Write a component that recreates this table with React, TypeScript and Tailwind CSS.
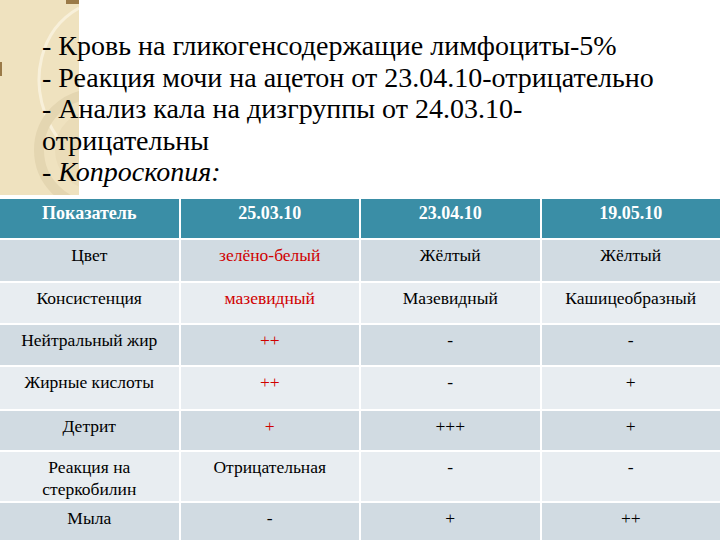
const lines = [
  { text: '- Кровь на гликогенсодержащие лимфоциты-5%' },
  { text: '- Реакция мочи на ацетон от 23.04.10-отрицательно' },
  { text: '- Анализ кала на дизгруппы от 24.03.10-' },
  { text: 'отрицательны' },
]

type Cell = { v: string; red?: boolean }

const rows: { h: string; cells: Cell[] }[] = [
  { h: 'h-[41px]', cells: [{ v: 'Цвет' }, { v: 'зелёно-белый', red: true }, { v: 'Жёлтый' }, { v: 'Жёлтый' }] },
  { h: 'h-[40px]', cells: [{ v: 'Консистенция' }, { v: 'мазевидный', red: true }, { v: 'Мазевидный' }, { v: 'Кашицеобразный' }] },
  { h: 'h-[40px]', cells: [{ v: 'Нейтральный жир' }, { v: '++', red: true }, { v: '-' }, { v: '-' }] },
  { h: 'h-[42px]', cells: [{ v: 'Жирные кислоты' }, { v: '++', red: true }, { v: '-' }, { v: '+' }] },
  { h: 'h-[39px]', cells: [{ v: 'Детрит' }, { v: '+', red: true }, { v: '+++' }, { v: '+' }] },
  { h: 'h-[49px]', cells: [{ v: 'Реакция на стеркобилин' }, { v: 'Отрицательная' }, { v: '-' }, { v: '-' }] },
  { h: 'h-[45px]', cells: [{ v: 'Мыла' }, { v: '-' }, { v: '+' }, { v: '++' }] },
]

const headers = ['Показатель', '25.03.10', '23.04.10', '19.05.10']

export default function App() {
  return (
    <div className="w-[720px] h-[540px] overflow-hidden bg-white [font-family:'Liberation_Serif','Times_New_Roman',serif] text-black">
      {/* Header text block with beige side panel */}
      <div className="relative h-[197px] pt-[30px] pl-[42px]">
        <div className="absolute left-0 top-0 w-[79px] h-[195px] bg-[#efe2bf] overflow-hidden">
          <svg width="79" height="195" viewBox="0 0 79 195" className="absolute inset-0">
            <rect x="66" y="0" width="13" height="4" fill="#9a7a48" />
            <rect x="0" y="62" width="2" height="14" fill="#9a7a48" />
            <path d="M79 8 C 40 30, 28 80, 50 125 C 60 145, 72 152, 79 155" fill="none" stroke="#f8f0da" strokeWidth="3" />
            <circle cx="95" cy="150" r="56" fill="none" stroke="#e4d6b1" strokeWidth="10" />
            <circle cx="95" cy="150" r="40" fill="#eadcb8" />
          </svg>
        </div>
        <div className="relative text-[28px] leading-[31.5px]">
          {lines.map((l, i) => (
            <div key={i} className="whitespace-nowrap">{l.text}</div>
          ))}
          <div>
            - <span className="italic">Копроскопия:</span>
          </div>
        </div>
      </div>

      {/* Table */}
      <div className="mt-[2px] flex flex-col gap-[2px] text-[17.5px] leading-[22px]">
        <div className="grid grid-cols-4 gap-[2px] h-[39px] bg-white">
          {headers.map((h) => (
            <div key={h} className="bg-[#3a8ea6] text-white text-[18px] font-bold text-center pt-[3px]">
              {h}
            </div>
          ))}
        </div>
        {rows.map((r, i) => (
          <div key={i} className={`grid grid-cols-4 gap-[2px] ${r.h}`}>
            {r.cells.map((c, j) => (
              <div
                key={j}
                className={`${i % 2 === 0 ? 'bg-[#d1dbe2]' : 'bg-[#e8edf1]'} text-center pt-[4px] px-5 ${c.red ? 'text-[#d00000]' : ''}`}
              >
                {c.v}
              </div>
            ))}
          </div>
        ))}
      </div>
    </div>
  )
}
